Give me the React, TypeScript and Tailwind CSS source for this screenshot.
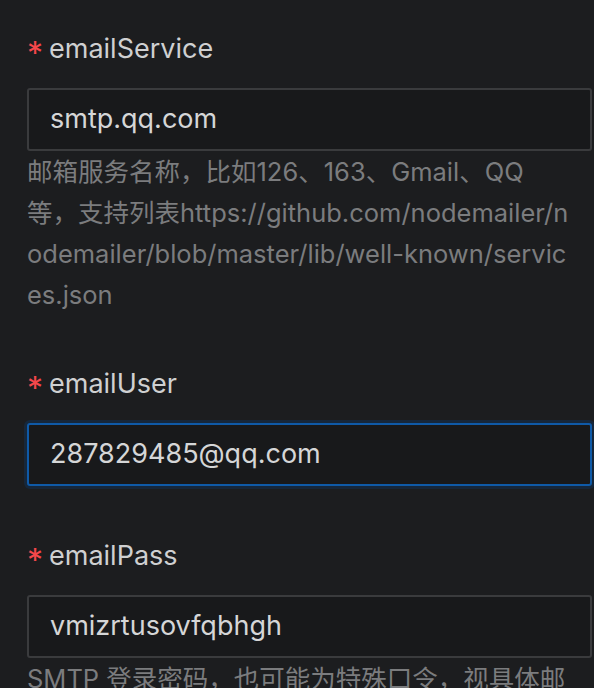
import React from "react";

const font = { fontFamily: '"Inter", "Noto Sans CJK SC", sans-serif' };

function Label({ text }: { text: string }) {
  return (
    <div className="flex items-center h-[40px] leading-[40px] mb-[19px]">
      <span className="text-[#f5474b] text-[32px] w-[22px] pt-[9px] leading-[40px]">*</span>
      <span className="text-[#cfd0d1] text-[27px]">{text}</span>
    </div>
  );
}

function Input({ value, focused }: { value: string; focused?: boolean }) {
  return (
    <div
      className={
        "h-[63px] flex items-center pl-[21px] rounded-[3px] bg-[#18191b] text-[#d5d6d7] text-[27px] " +
        (focused
          ? "border-2 border-[#0f5aa8] shadow-[0_0_0_3px_#16273b]"
          : "border-2 border-[#3a3b3d]")
      }
    >
      {value}
    </div>
  );
}

function Desc({ text }: { text: string }) {
  return (
    <div className="w-[545px] text-[#7b7c7e] text-[25.5px] leading-[41px] break-all">{text}</div>
  );
}

export default function App() {
  return (
    <div className="w-[594px] h-[688px] overflow-hidden bg-[#1c1d1f]" style={font}>
      <div className="pt-[29px] pl-[27px] pr-[2px]">
        <div className="mb-[49px]">
          <Label text="emailService" />
          <Input value="smtp.qq.com" />
          <Desc text="邮箱服务名称，比如126、163、Gmail、QQ等，支持列表https://github.com/nodemailer/nodemailer/blob/master/lib/well-known/services.json" />
        </div>
        <div className="mb-[50px]">
          <Label text="emailUser" />
          <Input value="287829485@qq.com" focused />
        </div>
        <div>
          <Label text="emailPass" />
          <Input value="vmizrtusovfqbhgh" />
          <Desc text="SMTP 登录密码，也可能为特殊口令，视具体邮箱服务商说明" />
        </div>
      </div>
    </div>
  );
}
